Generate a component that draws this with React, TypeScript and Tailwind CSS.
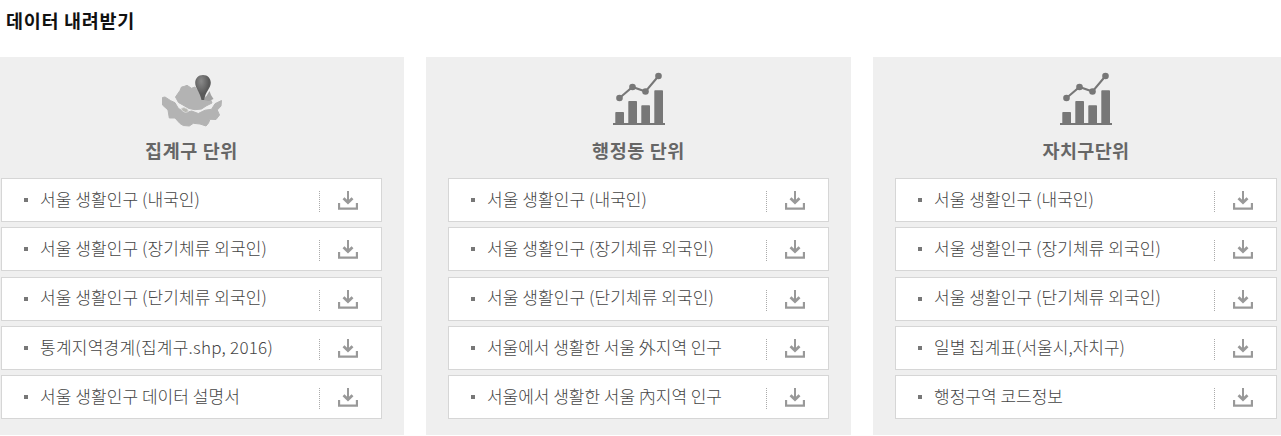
import React from "react";

type Item = { label: string; width: number };
type Panel = {
  title: string;
  titleWidth: number;
  icon: "map" | "chart";
  panel: string;
  items: Item[];
};

const panels: Panel[] = [
  {
    title: "집계구 단위",
    titleWidth: 93,
    icon: "map",
    panel: "w-[404px] pl-px pr-[22px]",
    items: [
      { label: "서울 생활인구 (내국인)", width: 160 },
      { label: "서울 생활인구 (장기체류 외국인)", width: 227 },
      { label: "서울 생활인구 (단기체류 외국인)", width: 227 },
      { label: "통계지역경계(집계구.shp, 2016)", width: 233 },
      { label: "서울 생활인구 데이터 설명서", width: 200 },
    ],
  },
  {
    title: "행정동 단위",
    titleWidth: 93,
    icon: "chart",
    panel: "ml-[22px] w-[425px] px-[22px]",
    items: [
      { label: "서울 생활인구 (내국인)", width: 160 },
      { label: "서울 생활인구 (장기체류 외국인)", width: 227 },
      { label: "서울 생활인구 (단기체류 외국인)", width: 227 },
      { label: "서울에서 생활한 서울 外지역 인구", width: 235 },
      { label: "서울에서 생활한 서울 內지역 인구", width: 235 },
    ],
  },
  {
    title: "자치구단위",
    titleWidth: 87,
    icon: "chart",
    panel: "ml-[22px] w-[408px] pl-[22px] pr-[4px]",
    items: [
      { label: "서울 생활인구 (내국인)", width: 160 },
      { label: "서울 생활인구 (장기체류 외국인)", width: 227 },
      { label: "서울 생활인구 (단기체류 외국인)", width: 227 },
      { label: "일별 집계표(서울시,자치구)", width: 191 },
      { label: "행정구역 코드정보", width: 129 },
    ],
  },
];

function FitText({ text, width, className }: { text: string; width: number; className: string }) {
  const ref = React.useRef<HTMLSpanElement>(null);
  const [spacing, setSpacing] = React.useState(0);
  React.useLayoutEffect(() => {
    const el = ref.current;
    if (el) setSpacing((width - el.getBoundingClientRect().width) / text.length);
  }, [text, width]);
  return (
    <span ref={ref} className={className} style={{ letterSpacing: `${spacing}px` }}>
      {text}
    </span>
  );
}

function MapIcon() {
  return (
    <svg width="62" height="54" viewBox="0 0 62 54" className="block overflow-visible">
      <defs>
        <radialGradient id="pin" cx="0.38" cy="0.25" r="0.5">
          <stop offset="0" stopColor="#8a8a8a" />
          <stop offset="1" stopColor="#5a5a5a" />
        </radialGradient>
      </defs>
      <g fill="#b3b3b3" stroke="#b3b3b3" strokeLinejoin="round" strokeWidth="1">
        <path d="M14.500 25L19 18.500L20.500 15L23 14.500L26 13.300L30.500 16.300L34 15L40.700 25L48.500 25L51 31L45 34L40.500 37L34 37.700L28 36.500L24 34.200L17.500 30.500Z" />
        <path d="M1.500 25.500L4 25L9.700 28.700L14 30.700L17.300 36.300L24 40.700L30.700 39L37.300 41.500L44 38.200L50.500 37.300L54 31.700L60.500 28.500L60 34L56.300 38L58.500 43L55 47.500L49 47.300L47.500 51L45 54L39 52L32.300 51.300L28.300 54L22.300 53.500L19 51.500L14 46L8.300 46L7 38L1.500 33Z" />
      </g>
      <path d="M20 36.500L23 35.500L26.500 37L27.500 39.500L24.500 40.500L21.500 39Z" fill="#b9b9b4" stroke="#dcdcdc" strokeWidth=".8" />
      <path d="M43 28L48.500 19L50 23L52.500 27L48 29Z" fill="#a2a2a2" />
      <path
        d="M42 3C37.200 3 34.200 6.500 34.200 10.800C34.200 16.500 39 20 40.500 28L43.200 28C44 20 49.800 16.500 49.800 10.800C49.800 6.500 46.800 3 42 3Z"
        fill="url(#pin)"
      />
    </svg>
  );
}

function ChartIcon() {
  return (
    <svg width="52" height="54" viewBox="0 0 52 54" className="block" fill="#777">
      <rect x="0" y="51" width="52" height="2" />
      <rect x="2.300" y="40" width="8.700" height="12" rx=".8" />
      <rect x="15.300" y="29" width="8.700" height="23" rx=".8" />
      <rect x="28.300" y="33.200" width="8.700" height="19" rx=".8" />
      <rect x="41.300" y="18.300" width="8.700" height="34" rx=".8" />
      <path d="M6.500 26L19.500 15L32.500 19.500L45.500 4" fill="none" stroke="#777" strokeWidth="2" />
      <circle cx="6.500" cy="26" r="3.300" />
      <circle cx="19.500" cy="15" r="3.300" />
      <circle cx="32.500" cy="19.500" r="3.300" />
      <circle cx="45.500" cy="4" r="3.300" />
    </svg>
  );
}

function DownloadIcon() {
  return (
    <svg width="20" height="19" viewBox="0 0 20 19" className="mt-px block shrink-0" fill="none" stroke="#999" strokeWidth="2">
      <path d="M1 12V17.700H19V12" strokeWidth="2.300" />
      <path d="M10 0V12" />
      <path d="M5.500 7.300L10 11.500L14.500 7.300" strokeWidth="2.800" />
    </svg>
  );
}

export default function App() {
  return (
    <main className="h-[436px] w-[1281px] overflow-hidden bg-white font-['Noto_Sans_CJK_KR',sans-serif]">
      <h1 className="flex h-[57px] items-start pl-[6px] pt-[7px] leading-[26px]">
        <FitText text="데이터 내려받기" width={129} className="whitespace-nowrap text-[18.5px] font-bold text-[#111]" />
      </h1>
      <div className="flex h-[378px]">
        {panels.map((panel) => (
          <section key={panel.title} className={`shrink-0 bg-[#efefef] ${panel.panel}`}>
            <div className="flex h-[121.2px] flex-col items-center pt-[15px]">
              {panel.icon === "map" ? <MapIcon /> : <ChartIcon />}
              <h2 className="mt-[11px] leading-[26px]">
                <FitText
                  text={panel.title}
                  width={panel.titleWidth}
                  className="whitespace-nowrap text-[18.5px] font-bold text-[#666]"
                />
              </h2>
            </div>
            <ul className="flex flex-col gap-[5.2px]">
              {panel.items.map((item) => (
                <li key={item.label} className="flex h-[44px] items-center border border-[#d6d6d6] bg-white pl-[22px] pr-[23px]">
                  <span className="mr-[12px] size-[4px] shrink-0 bg-[#777]" />
                  <FitText
                    text={item.label}
                    width={item.width}
                    className="mb-[2.3px] whitespace-nowrap text-[17px] font-light leading-[24px] text-[#444]"
                  />
                  <svg width="1" height="21" className="ml-auto mr-[18px] mt-[3px] block shrink-0">
                    <path d="M.5 0V21" stroke="#aaa" strokeDasharray="1 1" />
                  </svg>
                  <DownloadIcon />
                </li>
              ))}
            </ul>
          </section>
        ))}
      </div>
    </main>
  );
}
